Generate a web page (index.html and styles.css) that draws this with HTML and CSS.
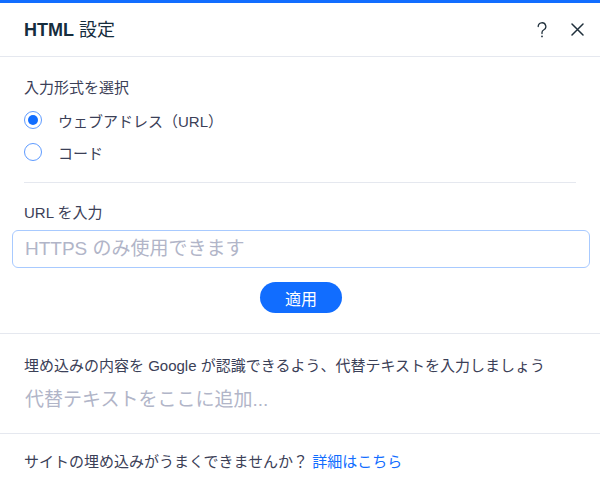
FILE: index.html
```html
<!DOCTYPE html>
<html lang="ja">
<head>
<meta charset="utf-8">
<title>HTML 設定</title>
<link rel="stylesheet" href="styles.css">
</head>
<body>
<div class="panel">
  <div class="topbar"></div>
  <header class="header">
    <h1 class="title"><b>HTML</b> 設定</h1>
    <div class="actions">
      <svg class="icon-help" width="10" height="16" viewBox="0 0 10 16" aria-label="ヘルプ">
        <path d="M1.2 4.6a3.8 3.8 0 1 1 5.4 3.4C5.4 8.6 5 9.3 5 10.6v1" fill="none" stroke="#20303c" stroke-width="1.3" stroke-linecap="round"/>
        <circle cx="5" cy="14.4" r="0.9" fill="#20303c"/>
      </svg>
      <svg class="icon-close" width="13" height="13" viewBox="0 0 13 13" aria-label="閉じる">
        <path d="M1 1L12 12M12 1L1 12" stroke="#20303c" stroke-width="1.5" stroke-linecap="round"/>
      </svg>
    </div>
  </header>

  <section class="section type">
    <div class="label">入力形式を選択</div>
    <div class="radio-row"><span class="radio checked"></span><span class="radio-text">ウェブアドレス（URL）</span></div>
    <div class="radio-row"><span class="radio"></span><span class="radio-text">コード</span></div>
    <div class="divider"></div>
  </section>

  <section class="section url">
    <div class="label">URL を入力</div>
    <input class="url-input" type="text" placeholder="HTTPS のみ使用できます">
    <div class="btn-row"><button class="btn">適用</button></div>
  </section>

  <section class="section alt">
    <div class="desc">埋め込みの内容を Google が認識できるよう、代替テキストを入力しましょう</div>
    <input class="alt-input" type="text" placeholder="代替テキストをここに追加...">
  </section>

  <footer class="footer">サイトの埋め込みがうまくできませんか？ <a class="link" href="#">詳細はこちら</a></footer>
</div>
</body>
</html>
```

FILE: styles.css
```css
* { box-sizing: border-box; }
html, body { margin: 0; padding: 0; background: #fff; }
body {
  font-family: "Liberation Sans", "Noto Sans CJK JP", sans-serif;
  color: #3b4057;
  width: 600px;
  height: 490px;
  overflow: hidden;
}
.topbar { height: 3px; background: #116dff; }
.header {
  height: 54px;
  display: flex;
  align-items: center;
  justify-content: space-between;
  padding: 0 16px 0 24px;
  border-bottom: 1px solid #e5e8ef;
}
.title {
  margin: 0;
  font-size: 18px;
  font-weight: 400;
  color: #162d3d;
  line-height: 24px;
  padding-top: 1px;
}
.title b { font-weight: 700; }
.actions { display: flex; align-items: center; gap: 24px; }
.icon-help { display: block; }
.icon-close { display: block; }

.section { display: flex; flex-direction: column; }
.label { font-size: 15px; line-height: 20px; padding: 0 24px; color: #3b4057; }

.type { padding-top: 21px; }
.type .label { margin-bottom: 6px; }
.radio-row { height: 32px; display: flex; align-items: center; padding-left: 24px; }
.radio {
  width: 18px; height: 18px;
  border: 1px solid #5e9bff;
  border-radius: 50%;
  display: flex; align-items: center; justify-content: center;
  margin-right: 16px;
}
.radio.checked::after {
  content: "";
  width: 10px; height: 10px;
  border-radius: 50%;
  background: #116dff;
}
.radio-text { font-size: 15px; color: #3b4057; }
.divider { height: 1px; background: #e5e8ef; margin: 14px 24px 0; }

.url { padding-top: 20px; border-bottom: 1px solid #e5e8ef; padding-bottom: 20px; }
.url-input {
  margin: 7px 10px 0 12px;
  height: 38px;
  border: 1px solid #a8caff;
  border-radius: 6px;
  padding: 0 12px;
  font-family: inherit;
  font-size: 19px;
  color: #3b4057;
  outline: none;
}
.url-input::placeholder, .alt-input::placeholder { color: #b1b5c8; }
.btn-row { display: flex; justify-content: center; margin-top: 14px; }
.btn {
  width: 82px; height: 31px;
  border: none;
  border-radius: 16px;
  background: #116dff;
  color: #fff;
  font-family: inherit;
  font-size: 16px;
  padding: 0;
  margin-left: 2px;
}

.alt { padding: 22px 24px 20px; border-bottom: 1px solid #e5e8ef; }
.desc { font-size: 15px; line-height: 20px; color: #3b4057; }
.alt-input {
  margin-top: 11px;
  height: 26px;
  border: none;
  padding: 0 0 0 1px;
  font-family: inherit;
  font-size: 19px;
  outline: none;
}

.footer { padding: 18px 24px 0; font-size: 15px; line-height: 20px; color: #3b4057; }
.link { color: #116dff; text-decoration: none; }
```
